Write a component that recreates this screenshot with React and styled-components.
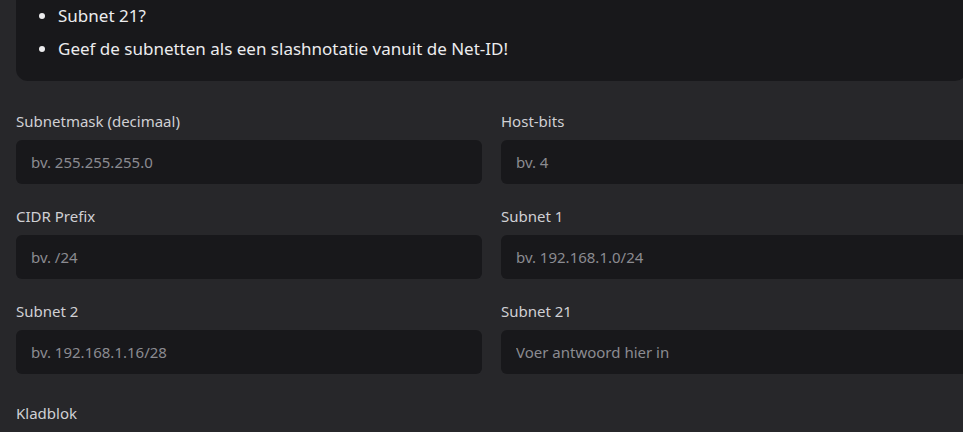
import React from "react";
import styled, { createGlobalStyle } from "styled-components";

const GlobalStyle = createGlobalStyle`
  html, body {
    margin: 0;
    padding: 0;
    background: #27272a;
    overflow: hidden;
  }
  body {
    font-family: "Noto Sans", "Open Sans", sans-serif;
    color: #e4e4e7;
  }
`;

const Page = styled.div`
  width: 983px;
  box-sizing: border-box;
  padding: 0 16px;
`;

const Card = styled.div`
  background: #18181b;
  border-radius: 0 0 12px 12px;
  padding: 3px 20px 20px;
`;

const BulletList = styled.ul`
  margin: 0;
  padding-left: 22px;
  list-style: disc;
`;

const Bullet = styled.li`
  font-size: 17px;
  line-height: 25px;
  color: #ececee;
  & + & {
    margin-top: 8px;
  }
`;

const FieldGrid = styled.div`
  display: grid;
  grid-template-columns: 1fr 1fr;
  column-gap: 19px;
  row-gap: 22px;
  margin-top: 30px;
`;

const Field = styled.label`
  display: flex;
  flex-direction: column;
  gap: 9px;
`;

const FieldLabel = styled.span`
  font-size: 15px;
  line-height: 20px;
  color: #d0d0d4;
`;

const TextInput = styled.input`
  height: 44px;
  box-sizing: border-box;
  border: none;
  outline: none;
  border-radius: 6px;
  background: #18181b;
  padding: 0 15px;
  font-family: inherit;
  font-size: 15px;
  color: #e4e4e7;
  &::placeholder {
    color: #8b8b91;
  }
`;

const Section = styled.div`
  margin-top: 28px;
`;

const fields = [
  { label: "Subnetmask (decimaal)", placeholder: "bv. 255.255.255.0" },
  { label: "Host-bits", placeholder: "bv. 4" },
  { label: "CIDR Prefix", placeholder: "bv. /24" },
  { label: "Subnet 1", placeholder: "bv. 192.168.1.0/24" },
  { label: "Subnet 2", placeholder: "bv. 192.168.1.16/28" },
  { label: "Subnet 21", placeholder: "Voer antwoord hier in" },
];

const App = () => {
  return (
    <>
      <GlobalStyle />
      <Page>
        <Card>
          <BulletList>
            <Bullet>Subnet 21?</Bullet>
            <Bullet>Geef de subnetten als een slashnotatie vanuit de Net-ID!</Bullet>
          </BulletList>
        </Card>
        <FieldGrid>
          {fields.map((f) => (
            <Field key={f.label}>
              <FieldLabel>{f.label}</FieldLabel>
              <TextInput type="text" placeholder={f.placeholder} />
            </Field>
          ))}
        </FieldGrid>
        <Section>
          <FieldLabel>Kladblok</FieldLabel>
        </Section>
      </Page>
    </>
  );
};

export default App;
